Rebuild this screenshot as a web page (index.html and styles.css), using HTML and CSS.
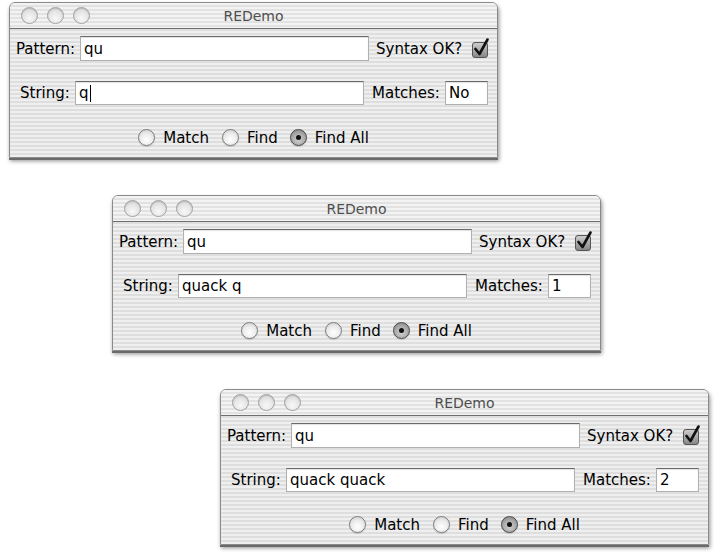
FILE: index.html
```html
<!DOCTYPE html>
<html>
<head>
<meta charset="utf-8">
<title>REDemo</title>
<link rel="stylesheet" href="styles.css">
</head>
<body>
<div class="desk">

  <div class="win w1">
    <div class="titlebar">
      <div class="lights"><span class="light"></span><span class="light"></span><span class="light"></span></div>
      <div class="title">REDemo</div>
    </div>
    <div class="content">
      <div class="row r1">
        <span class="lbl l-pattern">Pattern:</span>
        <div class="field f-pattern">qu</div>
        <span class="lbl l-syntax">Syntax OK?</span>
        <svg class="check" width="19" height="20" viewBox="0 0 19 20"><defs><linearGradient id="cg1" x1="0" y1="0" x2="0" y2="1"><stop offset="0" stop-color="#cfcfcf"/><stop offset="1" stop-color="#858585"/></linearGradient></defs><rect x="1.5" y="4.5" width="15" height="15" rx="2.5" fill="url(#cg1)" stroke="#555"/><path d="M4.5 11 L8.5 16 L16.5 1.5" fill="none" stroke="#111" stroke-width="2.6" stroke-linecap="round" stroke-linejoin="round"/></svg>
      </div>
      <div class="row r2">
        <span class="lbl l-string">String:</span>
        <div class="field f-string">q<span class="caret"></span></div>
        <span class="lbl l-matches">Matches:</span>
        <div class="field f-matches">No</div>
      </div>
      <div class="row r3">
        <span class="radio"></span><span class="lbl rl-match">Match</span>
        <span class="radio"></span><span class="lbl rl-find">Find</span>
        <span class="radio on"></span><span class="lbl">Find All</span>
      </div>
    </div>
  </div>

  <div class="win w2">
    <div class="titlebar">
      <div class="lights"><span class="light"></span><span class="light"></span><span class="light"></span></div>
      <div class="title">REDemo</div>
    </div>
    <div class="content">
      <div class="row r1">
        <span class="lbl l-pattern">Pattern:</span>
        <div class="field f-pattern">qu</div>
        <span class="lbl l-syntax">Syntax OK?</span>
        <svg class="check" width="19" height="20" viewBox="0 0 19 20"><defs><linearGradient id="cg2" x1="0" y1="0" x2="0" y2="1"><stop offset="0" stop-color="#cfcfcf"/><stop offset="1" stop-color="#858585"/></linearGradient></defs><rect x="1.5" y="4.5" width="15" height="15" rx="2.5" fill="url(#cg2)" stroke="#555"/><path d="M4.5 11 L8.5 16 L16.5 1.5" fill="none" stroke="#111" stroke-width="2.6" stroke-linecap="round" stroke-linejoin="round"/></svg>
      </div>
      <div class="row r2">
        <span class="lbl l-string">String:</span>
        <div class="field f-string">quack q</div>
        <span class="lbl l-matches">Matches:</span>
        <div class="field f-matches">1</div>
      </div>
      <div class="row r3">
        <span class="radio"></span><span class="lbl rl-match">Match</span>
        <span class="radio"></span><span class="lbl rl-find">Find</span>
        <span class="radio on"></span><span class="lbl">Find All</span>
      </div>
    </div>
  </div>

  <div class="win w3">
    <div class="titlebar">
      <div class="lights"><span class="light"></span><span class="light"></span><span class="light"></span></div>
      <div class="title">REDemo</div>
    </div>
    <div class="content">
      <div class="row r1">
        <span class="lbl l-pattern">Pattern:</span>
        <div class="field f-pattern">qu</div>
        <span class="lbl l-syntax">Syntax OK?</span>
        <svg class="check" width="19" height="20" viewBox="0 0 19 20"><defs><linearGradient id="cg3" x1="0" y1="0" x2="0" y2="1"><stop offset="0" stop-color="#cfcfcf"/><stop offset="1" stop-color="#858585"/></linearGradient></defs><rect x="1.5" y="4.5" width="15" height="15" rx="2.5" fill="url(#cg3)" stroke="#555"/><path d="M4.5 11 L8.5 16 L16.5 1.5" fill="none" stroke="#111" stroke-width="2.6" stroke-linecap="round" stroke-linejoin="round"/></svg>
      </div>
      <div class="row r2">
        <span class="lbl l-string">String:</span>
        <div class="field f-string">quack quack</div>
        <span class="lbl l-matches">Matches:</span>
        <div class="field f-matches">2</div>
      </div>
      <div class="row r3">
        <span class="radio"></span><span class="lbl rl-match">Match</span>
        <span class="radio"></span><span class="lbl rl-find">Find</span>
        <span class="radio on"></span><span class="lbl">Find All</span>
      </div>
    </div>
  </div>

</div>
</body>
</html>
```

FILE: styles.css
```css
* { box-sizing: border-box; }
html, body { margin: 0; padding: 0; background: #ffffff; }
body {
  font-family: "DejaVu Sans", "Liberation Sans", sans-serif;
  font-size: 15px;
  color: #000000;
}
.desk {
  position: relative;
  width: 720px;
  height: 557px;
  overflow: hidden;
}
.win {
  position: absolute;
  width: 489px;
  border: 1px solid #8a8a8a;
  border-radius: 6px 6px 0 0;
  background: repeating-linear-gradient(to bottom, #efefef 0, #efefef 2px, #dedede 2px, #dedede 4px);
  box-shadow: 0 2px 0 #6a6a6a, 1px 3px 4px rgba(0,0,0,0.45);
}
.w1 { left: 9px; top: 2px; }
.w2 { left: 112px; top: 195px; }
.w3 { left: 220px; top: 389px; }

.titlebar {
  position: relative;
  height: 26px;
  border-bottom: 1px solid #6e6e6e;
  border-radius: 5px 5px 0 0;
  background: repeating-linear-gradient(to bottom, #f3f3f3 0, #f3f3f3 2px, #e2e2e2 2px, #e2e2e2 4px);
  display: flex;
  align-items: center;
  justify-content: center;
}
.lights {
  position: absolute;
  left: 11px;
  top: 4px;
  display: flex;
  gap: 9px;
}
.light {
  width: 17px;
  height: 17px;
  border-radius: 50%;
  border: 1px solid #a0a0a0;
  background: radial-gradient(circle at 50% 70%, #f8f8f8 0, #e4e4e4 55%, #c8c8c8 100%);
  box-shadow: inset 0 1px 1px rgba(0,0,0,0.12);
}
.title {
  font-size: 14px;
  color: #4e4e4e;
  line-height: 26px;
}

.content {
  padding: 7px 0 11px 0;
}
.row {
  display: flex;
  align-items: center;
}
.r1 { height: 25px; padding-left: 6px; }
.r2 { height: 24px; margin-top: 20px; padding-left: 10px; }
.r3 { height: 17px; margin-top: 24px; justify-content: center; }

.lbl { white-space: nowrap; }
.l-pattern { width: 64px; }
.l-syntax { margin-left: 7px; width: 95px; }
.l-string { width: 55px; }
.l-matches { margin-left: 8px; width: 73px; }

.field {
  height: 100%;
  background: #ffffff;
  border: 1px solid #b0b0b0;
  border-top-color: #6a6a6a;
  box-shadow: inset 0 1px 1px rgba(0,0,0,0.12);
  padding: 0 3px;
  display: flex;
  align-items: center;
  white-space: nowrap;
}
.f-pattern { width: 289px; }
.f-string { width: 289px; }
.f-matches { width: 43px; }

.caret {
  display: inline-block;
  width: 1px;
  height: 17px;
  background: #000;
  margin-left: 1px;
}
.check { display: block; margin-top: -2px; }

.radio {
  width: 17px;
  height: 17px;
  border-radius: 50%;
  border: 1px solid #7c7c7c;
  background: radial-gradient(circle at 50% 65%, #ffffff 0, #ececec 50%, #c6c6c6 100%);
  box-shadow: 0 1px 1px rgba(0,0,0,0.15);
  margin-right: 8px;
  position: relative;
  flex: none;
}
.radio.on {
  border-color: #4a4a4a;
  background: radial-gradient(circle at 50% 65%, #d0d0d0 0, #a8a8a8 55%, #7a7a7a 100%);
}
.radio.on::after {
  content: "";
  position: absolute;
  left: 5px;
  top: 5px;
  width: 5px;
  height: 5px;
  border-radius: 50%;
  background: #111;
}
.rl-match { margin-right: 13px; }
.rl-find { margin-right: 12px; }
```
